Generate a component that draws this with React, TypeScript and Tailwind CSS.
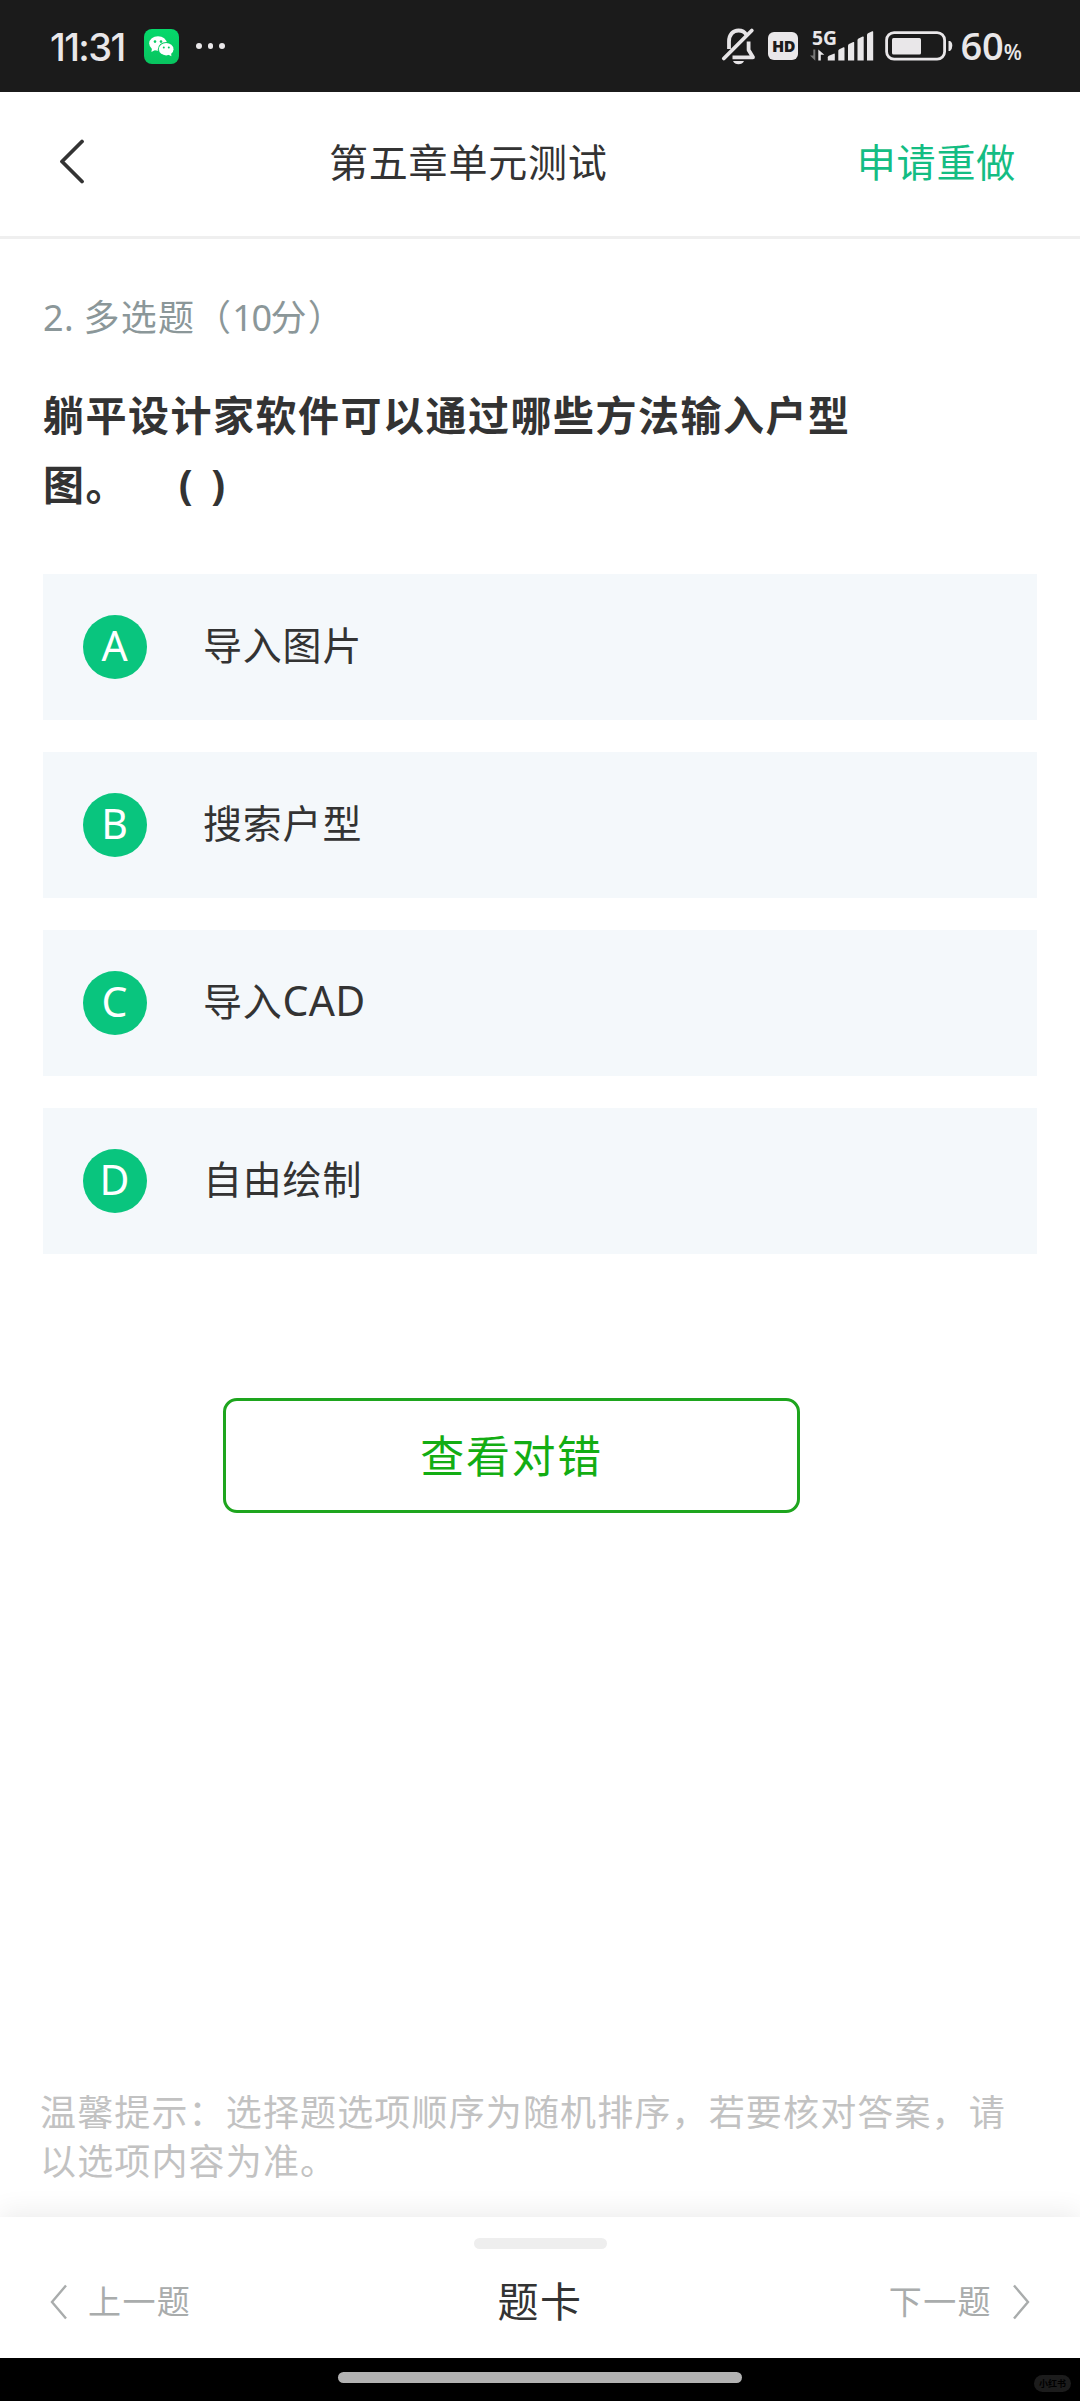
import React from "react";

interface Option {
  key: string;
  label: string;
  latin?: string;
}

const options: Option[] = [
  { key: "A", label: "导入图片" },
  { key: "B", label: "搜索户型" },
  { key: "C", label: "导入", latin: "CAD" },
  { key: "D", label: "自由绘制" },
];

const WechatIcon: React.FC = () => (
  <svg width="35" height="35" viewBox="0 0 35 35" className="ml-[19px]">
    <defs>
      <linearGradient id="wechat" x1="0" y1="0" x2="0" y2="1">
        <stop offset="0" stopColor="#06d96b" />
        <stop offset="1" stopColor="#08c45f" />
      </linearGradient>
    </defs>
    <rect width="35" height="35" rx="8" fill="url(#wechat)" />
    <ellipse cx="14" cy="14.5" rx="8.8" ry="7.3" fill="#fff" />
    <path d="M8 19l-0.6 4 4.2-2.2z" fill="#fff" />
    <ellipse cx="22.2" cy="20.2" rx="8.3" ry="7.2" fill="#07cc64" />
    <ellipse cx="22.2" cy="20.2" rx="7.3" ry="6.2" fill="#fff" />
    <path d="M24 25.5l3.4 1.7-0.4-4z" fill="#fff" />
    <circle cx="11" cy="12.6" r="1.3" fill="#07cc64" />
    <circle cx="17" cy="12.6" r="1.3" fill="#07cc64" />
    <circle cx="19.8" cy="18.4" r="1" fill="#07cc64" />
    <circle cx="24.8" cy="18.4" r="1" fill="#07cc64" />
  </svg>
);

const MutedBellIcon: React.FC = () => (
  <svg width="36" height="40" viewBox="0 0 36 40" fill="none" stroke="#e6e4e6" strokeWidth="3.8">
    <path d="M8 23V15.5C8 8.5 12 4.5 17.5 4.5c4 0 6.3 1.6 7.8 4.2" />
    <path d="M11.5 31.3H32L27.6 24V15.5" strokeLinejoin="round" />
    <path d="M2.8 32.5L30.8 4.5" strokeLinecap="round" />
    <path d="M12 35h11c-1 2.2-3 3.3-5.5 3.3S13 37.2 12 35z" fill="#e6e4e6" stroke="none" />
  </svg>
);

const SignalIcon: React.FC = () => (
  <svg width="66" height="50" viewBox="0 -8 66 50" fill="#e9e7e9" className="ml-[11px]">
    <text x="3" y="16" fontSize="19" fontWeight="700" fontFamily="Open Sans, sans-serif" textLength="25" lengthAdjust="spacingAndGlyphs">
      5G
    </text>
    <path d="M4.3 20.5h2v11.2L1 26.6h3.3z" fill="#777" />
    <path d="M9.3 31.5V20.5l6 5.3h-3.5v5.7z" />
    <path d="M18.8 31.5v-3.3q0-1 1-1.5l5-2q1-.4 1 .7v6.1z" />
    <path d="M29.3 31.5V21.8q0-1 1-1.5l4.200-2q1-.4 1 .7v12.500z" />
    <path d="M39 31.500V16.600q0-1 1-1.500l4.200-2q1-.4 1 .7v17.700z" />
    <path d="M48.500 31.500V11.100q0-1 1-1.500l4.200-2q1-.4 1 .7v23.200z" />
    <path d="M58 31.500V5.800q0-1 1-1.500l4.200-2q1-.4 1 .7v28.500z" />
  </svg>
);

const BatteryIcon: React.FC = () => (
  <svg width="68" height="30" viewBox="0 0 68 30" className="ml-[10px]">
    <rect x="1.6" y="1.6" width="58" height="26.6" rx="7.5" fill="none" stroke="#e9e7e9" strokeWidth="2.8" />
    <rect x="7" y="7" width="29" height="16.5" rx="1.5" fill="#e9e7e9" />
    <path d="M63.5 10h1.5q2.3 1 2.3 4.7T65 20h-1.5z" fill="#e9e7e9" />
  </svg>
);

const StatusBar: React.FC = () => (
  <div className="flex h-[92px] items-center justify-between bg-[#1b1b1b] pl-[50px] pr-[58px] text-[#e9e7e9]">
    <div className="flex items-center">
      <span className="mt-[2px] w-[75px] whitespace-nowrap font-['Inter'] text-[38px] font-medium leading-[60px] tracking-[-1.6px]">
        11:31
      </span>
      <WechatIcon />
      <div className="ml-[17px] flex gap-[6px]">
        <span className="size-[5.5px] rounded-full bg-[#e9e7e9]" />
        <span className="size-[5.5px] rounded-full bg-[#e9e7e9]" />
        <span className="size-[5.5px] rounded-full bg-[#e9e7e9]" />
      </div>
    </div>
    <div className="flex items-center">
      <MutedBellIcon />
      <span className="ml-[11px] flex h-[28px] w-[30px] items-center justify-center rounded-[6px] bg-[#e9e7e9] font-['Open_Sans'] text-[16px] font-extrabold tracking-[-0.5px] text-[#1b1b1b]">
        HD
      </span>
      <SignalIcon />
      <BatteryIcon />
      <p className="ml-[7px] whitespace-nowrap pb-[2px] font-['Open_Sans'] text-[38px] font-semibold leading-[60px]">
        60<span className="text-[21px] leading-none">%</span>
      </p>
    </div>
  </div>
);

const App: React.FC = () => {
  return (
    <div className="flex h-[2401px] w-[1080px] flex-col bg-white font-['Noto_Sans','Noto_Sans_CJK_SC',sans-serif] text-[#333]">
      <StatusBar />

      {/* Page header */}
      <header className="flex h-[147px] items-center border-b-[3px] border-[#efefef] pb-[4px] pl-[59px] pr-[64px]">
        <svg width="26" height="46" viewBox="0 0 26 46" fill="none" stroke="#333" strokeWidth="3.8" strokeLinecap="round" strokeLinejoin="round">
          <path d="M23 2.5L3 22.500l20 20" />
        </svg>
        <h1 className="ml-[244px] text-[39px] leading-[60px] tracking-[0.8px]">第五章单元测试</h1>
        <button className="ml-auto text-[39px] leading-[60px] tracking-[0.8px] text-[#14bd83]">
          申请重做
        </button>
      </header>

      {/* Question */}
      <main className="flex flex-1 flex-col px-[43px]">
        <p className="mt-[49px] text-[36px] leading-[60px] tracking-[1.2px] text-[#8b9799]">
          <span className="tracking-[0.3px]">2. </span>多选题（
          <span className="tracking-[-1.5px]">10</span>分）
        </p>
        <h2 className="mt-[33px] whitespace-pre text-[41px] font-bold leading-[69px] tracking-[1.5px]">
          躺平设计家软件可以通过哪些方法输入户型
          <br />
          图。{"    "}
          <span className="pl-[2px] tracking-[4px]">( )</span>
        </h2>

        <ul className="mt-[55px] flex flex-col gap-[32px]">
          {options.map((option) => (
            <li key={option.key} className="flex h-[146px] items-center bg-[#f4f8fb] pl-[40px]">
              <span className="flex size-[64px] items-center justify-center rounded-full bg-[#09c57e] pb-[4px] pr-px text-[41px] leading-[60px] text-white">
                {option.key}
              </span>
              <span className="ml-[56px] pb-[4px] text-[39px] leading-[60px] tracking-[0.8px]">
                {option.label}
                {option.latin && <span className="text-[41px] leading-none tracking-[0.3px]">{option.latin}</span>}
              </span>
            </li>
          ))}
        </ul>

        <button className="ml-[180px] mt-[144px] h-[115px] w-[577px] rounded-[14px] border-[3px] border-[#1ea51e] text-[44px] tracking-[1.6px] text-[#13ad13]">
          查看对错
        </button>

        <p className="-ml-[3px] -mr-[2px] mb-[31px] mt-auto text-[36px] leading-[49px] tracking-[1.15px] text-[#c2c2c2]">
          温馨提示：选择题选项顺序为随机排序，若要核对答案，请以选项内容为准。
        </p>
      </main>

      {/* Pager */}
      <footer className="flex h-[141px] flex-col items-center bg-white shadow-[0_-6px_24px_rgba(0,0,0,0.07)]">
        <span className="mt-[21px] h-[11px] w-[133px] rounded-full bg-[#eee]" />
        <div className="mt-[22px] grid w-full grid-cols-[1fr_auto_1fr] items-center px-[49px] text-[33px] leading-[60px] tracking-[1.4px] text-[#a9acac]">
          <button className="flex items-center gap-[21px]">
            <svg width="18" height="36" viewBox="0 0 18 36" fill="none" stroke="currentColor" strokeWidth="2.4">
              <path d="M17 1.5L3 18l14 16.5" />
            </svg>
            上一题
          </button>
          <button className="pb-[2px] text-[41px] text-[#333]">题卡</button>
          <button className="flex items-center gap-[21px] justify-self-end">
            下一题
            <svg width="18" height="36" viewBox="0 0 18 36" fill="none" stroke="currentColor" strokeWidth="2.4">
              <path d="M1 1.5L15 18L1 34.5" />
            </svg>
          </button>
        </div>
      </footer>

      {/* System gesture bar */}
      <div className="relative flex h-[43px] justify-center bg-black pt-[14px]">
        <span className="h-[11px] w-[404px] rounded-full bg-[#b2b2b2]" />
        <span className="absolute right-[9px] top-[17px] flex h-[17px] w-[37px] items-center justify-center rounded-full bg-[#1c1c1c] text-[9px] font-bold text-black">
          小红书
        </span>
      </div>
    </div>
  );
};

export default App;
